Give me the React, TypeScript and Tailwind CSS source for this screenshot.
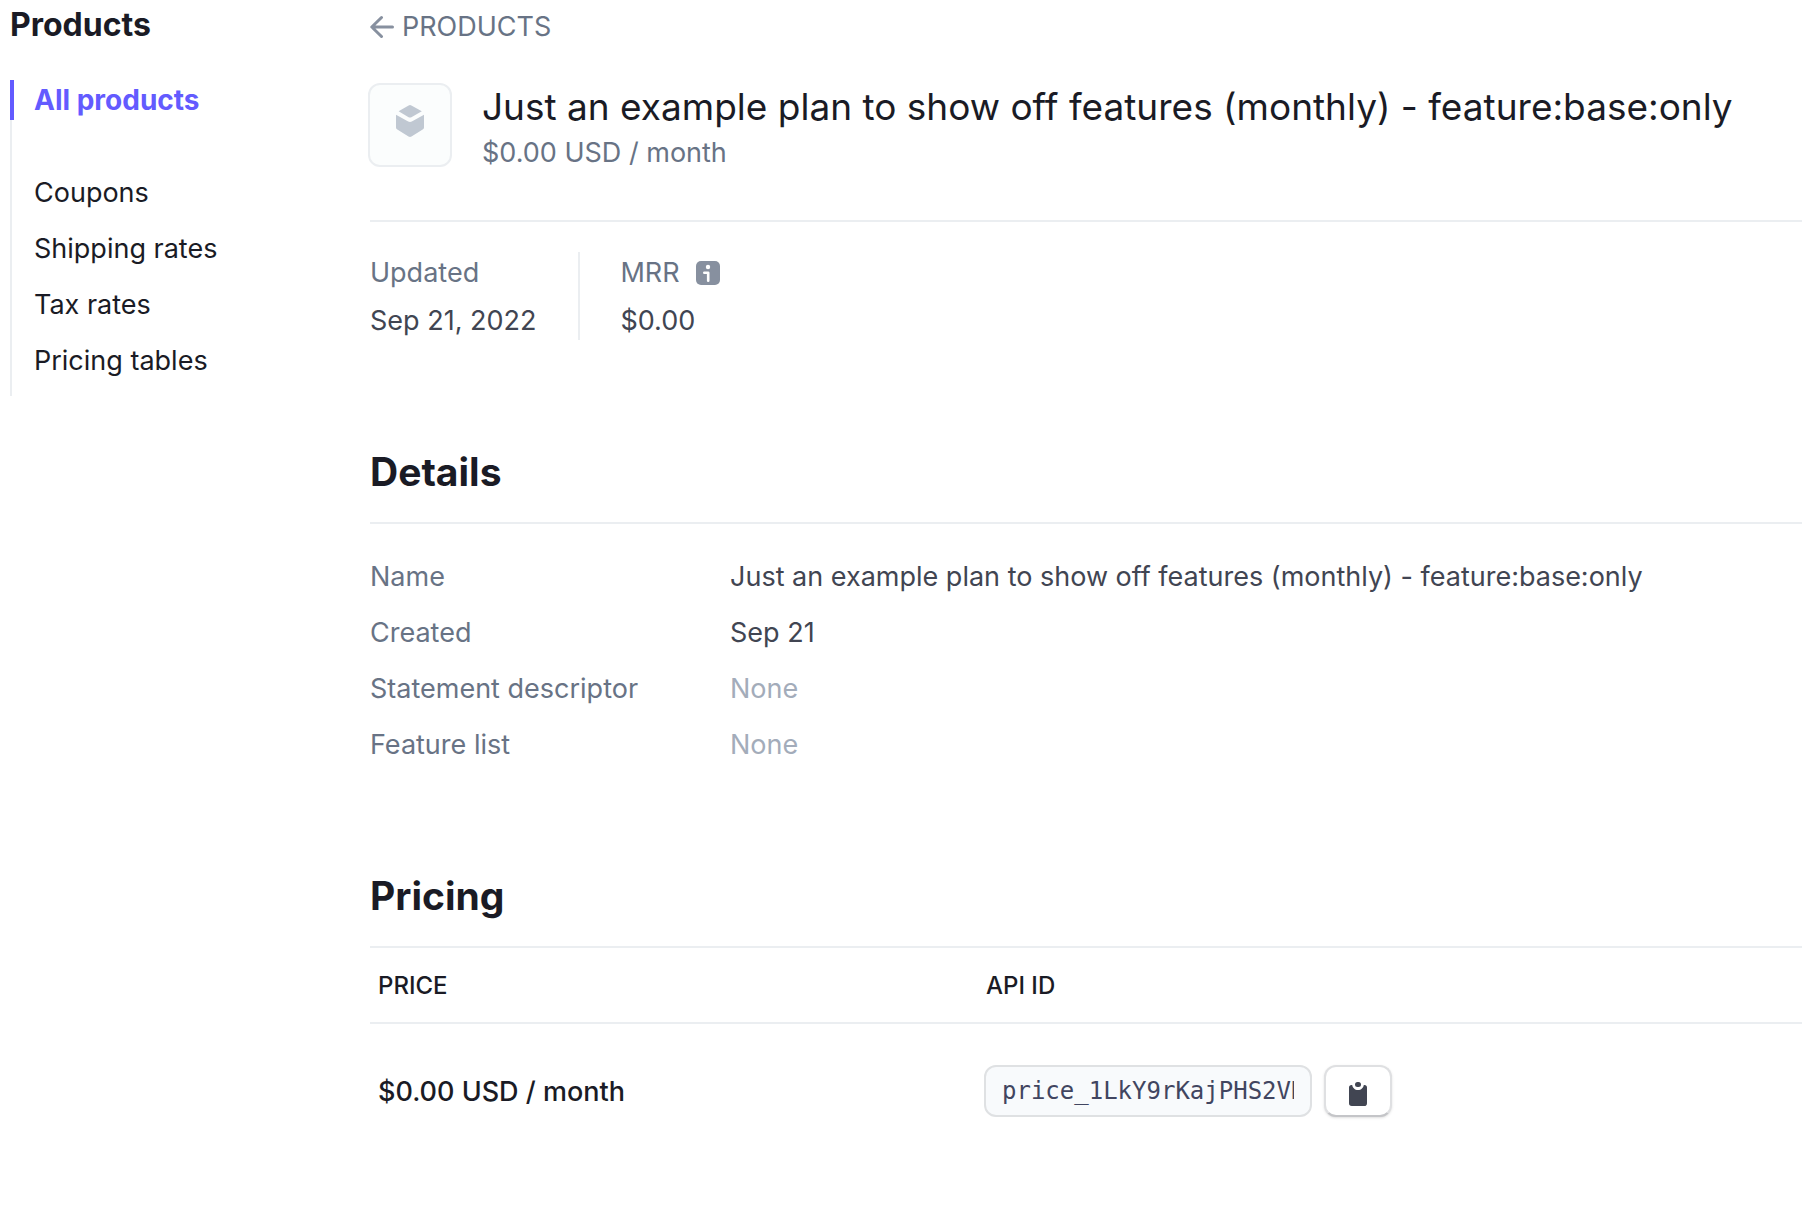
import React from "react";

const navLinks = ["Coupons", "Shipping rates", "Tax rates", "Pricing tables"];

const productName = "Just an example plan to show off features (monthly) - feature:base:only";

const details = [
  { label: "Name", value: productName },
  { label: "Created", value: "Sep 21" },
  { label: "Statement descriptor", value: null },
  { label: "Feature list", value: null },
];

function ArrowLeftIcon() {
  return (
    <svg width="24" height="24" viewBox="0 0 24 24" fill="none" stroke="#87909f" strokeWidth="3" strokeLinecap="round" strokeLinejoin="round" aria-hidden="true">
      <path d="M22.5 12H2M11.5 2.5 1.8 12l9.7 9.5" />
    </svg>
  );
}

function BoxIcon() {
  return (
    <svg width="28" height="32" viewBox="0 0 28 32" fill="#c0c8d2" aria-hidden="true">
      <path d="M12.6.4a3 3 0 0 1 2.8 0L25.8 6.2 15.4 12.2a3 3 0 0 1-2.8 0L2.6 6.2z" />
      <path d="M0 9.8l12.2 6.7a3.8 3.8 0 0 0 3.6 0L28 9.8v12.6a2.6 2.6 0 0 1-1.3 2.2l-11.2 6.9a3 3 0 0 1-3 0L1.3 24.6A2.6 2.6 0 0 1 0 22.4z" />
    </svg>
  );
}

function InfoIcon() {
  return (
    <svg width="24" height="24" viewBox="0 0 24 24" aria-hidden="true">
      <rect width="24" height="24" rx="5" fill="#87909f" />
      <circle cx="12" cy="6" r="2.2" fill="#fff" />
      <path d="M8.3 11.8h3.9v7.9" fill="none" stroke="#fff" strokeWidth="2.6" strokeLinecap="round" strokeLinejoin="round" />
    </svg>
  );
}

function ClipboardIcon() {
  return (
    <svg width="18" height="24" viewBox="0 0 18 24" fill="#414552" aria-hidden="true">
      <path d="M2.6 3h.6c.4 2.9 2.6 5 5.8 5s5.4-2.1 5.8-5h.6A2.6 2.6 0 0 1 18 5.6v15.6A2.8 2.8 0 0 1 15.2 24H2.8A2.8 2.8 0 0 1 0 21.2V5.6A2.6 2.6 0 0 1 2.6 3z" />
      <rect x="6" y="0" width="6" height="5" rx="2.5" />
    </svg>
  );
}

function Sidebar() {
  return (
    <aside className="w-[360px] shrink-0 pt-[5px]">
      <h2 className="text-[32px] leading-10 font-bold">Products</h2>
      <nav aria-label="Products" className="mt-[35px] flex w-[270px] flex-col gap-[14px] border-l-2 border-[#ebeef1] pb-[14px]">
        <a href="#all" aria-current="page" className="-ml-0.5 mb-[38px] border-l-4 border-[#635bff] pl-5 text-[28px] leading-10 font-bold text-[#635bff]">
          All products
        </a>
        {navLinks.map((label) => (
          <a key={label} href="#" className="pl-[22px] text-[27px] leading-[42px]">
            {label}
          </a>
        ))}
      </nav>
    </aside>
  );
}

function ProductHeader() {
  return (
    <header className="mt-[34px] flex gap-[30px] border-b-2 border-[#ebeef1] pb-[46px]">
      <div className="-ml-0.5 mt-px flex size-[84px] shrink-0 items-start justify-center rounded-xl border-2 border-[#ebeef1] bg-[#fbfdfd] pt-5">
        <BoxIcon />
      </div>
      <div className="flex flex-col whitespace-nowrap">
        <h1 className="text-[37px] leading-[50px]">{productName}</h1>
        <p className="text-[27px] leading-[42px] text-[#687385]">$0.00 USD / month</p>
      </div>
    </header>
  );
}

function Stats() {
  return (
    <dl className="mt-[30px] flex h-[88px] text-[27px] leading-[42px]">
      <div className="flex flex-col gap-1.5 border-r-2 border-[#ebeef1] pr-[42px]">
        <dt className="text-[#687385]">Updated</dt>
        <dd className="text-[#414552]">Sep 21, 2022</dd>
      </div>
      <div className="flex flex-col gap-1.5 pl-10">
        <dt className="flex items-center gap-4 text-[#687385]">
          MRR
          <button type="button" aria-label="About MRR">
            <InfoIcon />
          </button>
        </dt>
        <dd className="text-[#414552]">$0.00</dd>
      </div>
    </dl>
  );
}

function Details() {
  return (
    <section className="mt-[108px]">
      <h2 className="border-b-2 border-[#ebeef1] pb-[26px] text-[39px] leading-12 font-bold">Details</h2>
      <dl className="mt-8 grid grid-cols-[360px_1fr] gap-y-[14px] text-[27px] leading-[42px]">
        {details.map(({ label, value }) => (
          <React.Fragment key={label}>
            <dt className="text-[#687385]">{label}</dt>
            <dd className={value ? "text-[#414552]" : "text-[#a3acba]"}>{value ?? "None"}</dd>
          </React.Fragment>
        ))}
      </dl>
    </section>
  );
}

function Pricing() {
  return (
    <section className="mt-[106px]">
      <h2 className="pb-[26px] text-[39px] leading-12 font-bold">Pricing</h2>
      <table className="w-full table-fixed border-collapse text-left">
        <thead>
          <tr className="border-y-2 border-[#ebeef1] text-[24px] leading-10">
            <th scope="col" className="w-[606px] px-2 pt-[18px] pb-4 font-medium">PRICE</th>
            <th scope="col" className="px-2.5 pt-[18px] pb-4 font-medium">API ID</th>
          </tr>
        </thead>
        <tbody>
          <tr>
            <td className="px-2 pt-[42px] text-[27px] leading-10 font-medium">$0.00 USD / month</td>
            <td className="px-2 pt-[41px]">
              <div className="flex gap-3">
                <input
                  aria-label="API ID"
                  readOnly
                  defaultValue="price_1LkY9rKajPHS2VN4"
                  className="h-[52px] w-[328px] rounded-xl border-2 border-[#dfe1e3] bg-[#f8fafc] px-4 font-['DejaVu_Sans_Mono',monospace] text-[24px] text-[#414560]"
                />
                <button
                  type="button"
                  aria-label="Copy API ID"
                  className="flex h-[52px] w-[68px] items-center justify-center rounded-xl border-2 border-[#dfe0e2] border-b-[#c4c5c8] bg-white pt-1.5 shadow-sm"
                >
                  <ClipboardIcon />
                </button>
              </div>
            </td>
          </tr>
        </tbody>
      </table>
    </section>
  );
}

export default function App() {
  return (
    <div className="flex min-h-screen overflow-x-hidden bg-white pl-2.5 font-[Inter,sans-serif] text-[#1a1b25]">
      <Sidebar />
      <main className="min-w-0 flex-1 pt-1.5">
        <a href="#products" className="inline-flex items-center gap-2 align-top text-[27px] leading-[42px] text-[#687385]">
          <ArrowLeftIcon />
          PRODUCTS
        </a>
        <ProductHeader />
        <Stats />
        <Details />
        <Pricing />
      </main>
    </div>
  );
}
